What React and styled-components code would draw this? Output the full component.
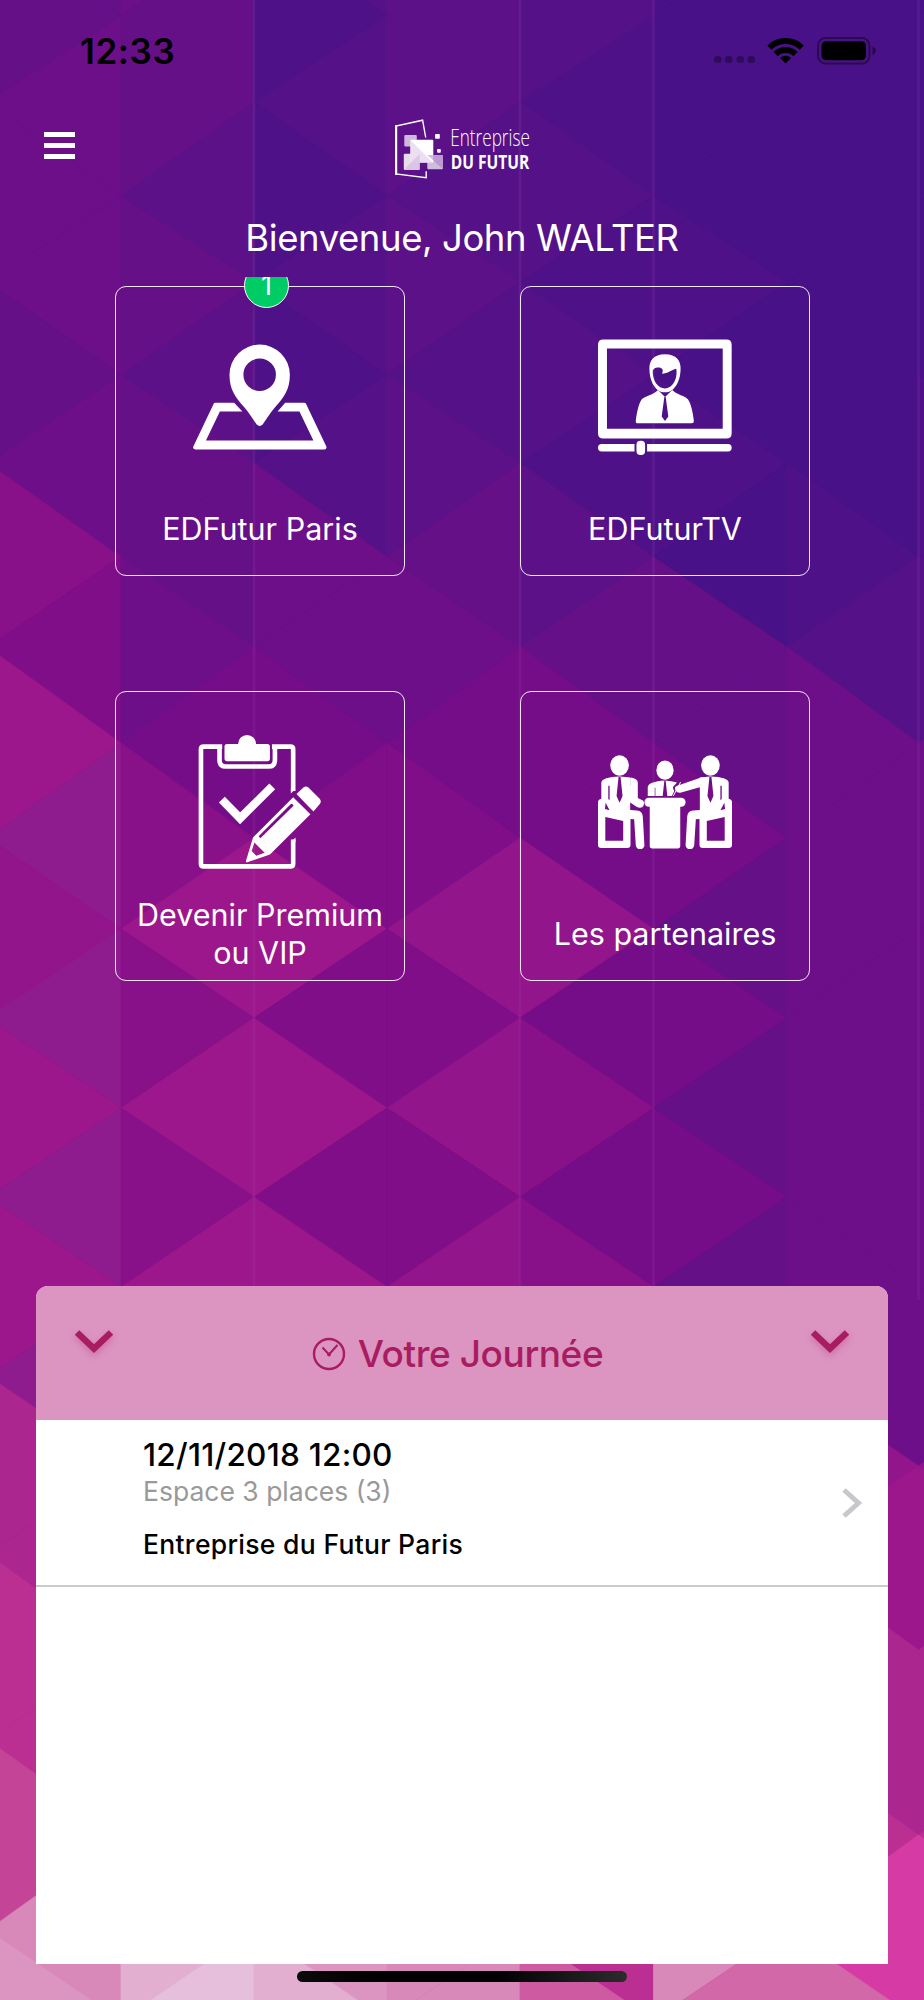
import styled, { createGlobalStyle } from 'styled-components';

const GlobalStyle = createGlobalStyle`
  * {
    box-sizing: border-box;
  }

  body {
    margin: 0;
    font-family: Inter, 'Liberation Sans', sans-serif;
  }
`;

// triangle mosaic: one string per column, one colour key per half step
const palette = {
  0: '#481187',
  1: '#4e1187',
  2: '#551288',
  3: '#5d1188',
  4: '#651087',
  5: '#6d0f88',
  6: '#750d88',
  7: '#7f0e88',
  8: '#881089',
  9: '#92158b',
  a: '#9b178b',
  b: '#8f1c8e',
  c: '#ac268f',
  d: '#bb2f92',
  e: '#c44598',
  f: '#d888b9',
  g: '#dc95c1',
  h: '#e2afd1',
  i: '#e5bfdb',
  j: '#ce5ba2',
  k: '#d63ba5',
  l: '#d268a8',
};

const columns = [
  '445554587ab9bababccddefg',
  '54434344568a8a8a7aaccdhi',
  '21212125567a7a7a7aacddgh',
  '33323234567979798aacddff',
  '2212121346696868588aacdj',
  '0000101044646464558aacfl',
  '000000012555555559accdkl',
  '000000112555555559accdkk',
];

const lineX = [-12, 121, 254, 387, 520, 653.5, 787, 918.5, 1052];
const stepY = [
  -78, 16, 102, 196, 282, 375, 463, 557, 647, 743, 838, 929, 1018, 1108, 1197,
  1287, 1376, 1466, 1554, 1650, 1740, 1835, 1930, 2020, 2110,
];

const trianglePoints = (col, i) => {
  const baseOnLeft = col % 2 !== i % 2;
  const baseX = baseOnLeft ? lineX[col] : lineX[col + 1];
  const tipX = baseOnLeft ? lineX[col + 1] : lineX[col];
  const top = i === 0 ? -170 : stepY[i - 1];
  return `${baseX},${top} ${tipX},${stepY[i]} ${baseX},${stepY[i + 1]}`;
};

function Mosaic() {
  return (
    <Backdrop viewBox="0 0 924 2000" aria-hidden="true">
      {columns.map((keys, col) =>
        keys.split('').map((key, i) => (
          <polygon
            key={`${col}-${i}`}
            points={trianglePoints(col, i)}
            fill={palette[key]}
            stroke={palette[key]}
            strokeWidth="0.8"
          />
        ))
      )}
      {[254, 520, 653.5, 918.5].map((x) => (
        <path key={x} d={`M${x} 0V1300`} stroke="#b04fc0" strokeOpacity="0.16" strokeWidth="2.5" />
      ))}
    </Backdrop>
  );
}

function StatusIcons() {
  return (
    <svg width="164" height="30" viewBox="713 35 164 30">
      <g fill="#000" fillOpacity="0.32">
        <rect x="714" y="56" width="7.5" height="7" rx="3" />
        <rect x="725" y="56" width="7.5" height="7" rx="3" />
        <rect x="736.5" y="56" width="7.5" height="7" rx="3" />
        <rect x="747.5" y="56" width="7.5" height="7" rx="3" />
      </g>
      <g fill="none" stroke="#000" strokeWidth="6">
        <path d="M769.4 47.6a23.4 23.4 0 0 1 32.4 0" />
        <path d="M775.6 54a14.6 14.6 0 0 1 20 0" />
      </g>
      <path d="M785.6 63.5l-5.500-5.500a8 8 0 0 1 11 0z" />
      <rect x="818" y="38" width="51.5" height="25.5" rx="7.5" fill="none" stroke="#000" strokeOpacity="0.4" strokeWidth="2" />
      <rect x="821.5" y="41.3" width="44.5" height="19" rx="4.5" />
      <path d="M872.5 46.5c4.5 1.5 4.5 7 0 8.700z" fillOpacity="0.45" />
    </svg>
  );
}

function Logo() {
  return (
    <LogoMark width="140" height="62" viewBox="391.7 118 140 62">
      <path
        d="M425.4 137.5L422.3 120.2 395.6 126v48l30.300 3.700v-6.500"
        fill="none"
        stroke="#fff"
        strokeWidth="1.4"
      />
      <path d="M395.9 125v50" stroke="#fff" strokeWidth="2" />
      <rect x="404" y="135" width="12.5" height="11.5" rx="1" fillOpacity="0.7" />
      <rect x="410" y="139.8" width="23" height="23" rx="1" />
      <rect x="403.5" y="153.7" width="16" height="16.3" rx="1" fillOpacity="0.85" />
      <rect x="427" y="155" width="15.7" height="14.2" rx="1" fillOpacity="0.72" />
      <path d="M410 140l23 23h-23z" fill="#d9bfe4" fillOpacity="0.5" />
      <path d="M403.5 170l16-16.300v16.300z" fill="#c9a6da" fillOpacity="0.4" />
      <path d="M427 155l15.700 14.200v-14.200z" fill="#a878c4" fillOpacity="0.5" />
      <rect x="434.8" y="134" width="4.7" height="4.7" rx="0.8" />
      <rect x="436.8" y="149" width="3.7" height="3.8" rx="0.8" />
      <LogoText x="450" y="146" textLength="79.5" lengthAdjust="spacingAndGlyphs" $weight={300} $size={23.5}>
        Entreprise
      </LogoText>
      <LogoText x="450.5" y="169" textLength="78.5" lengthAdjust="spacingAndGlyphs" $weight={700} $size={19.5}>
        DU FUTUR
      </LogoText>
    </LogoMark>
  );
}

function MapPinIcon() {
  return (
    <TileIcon viewBox="278 181 404 404">
      <path
        fillRule="evenodd"
        d="M479 225a91 91 0 0 1 91 91c0 45-18 68-44 97-16 18-26 36-38 53q-9 9-18 0c-12-17-22-35-38-53-26-29-44-52-44-97a91 91 0 0 1 91-91zM479 267a49 49 0 1 0 0 98 49 49 0 1 0 0-98z"
      />
      <path d="M345 400H402L427 427H359L317 514H641L599 427H533L556 400H613q4 0 6 4L680 532q2 9-6 9H285q-9-1-6-9L340 404q1-4 5-4z" />
    </TileIcon>
  );
}

function TvIcon() {
  return (
    <TileIcon viewBox="291 181 404 404">
      <path
        fillRule="evenodd"
        d="M307 210H678q16 0 16 16V492q0 16-16 16H307q-16 0-16-16V226q0-16 16-16zM318 237V479H667V237z"
      />
      <path
        fillRule="evenodd"
        d="M493 254c35 0 47 20 47 42 0 42-20 73-47 73s-47-31-47-73c0-22 12-42 47-42zM456 306c0-12 20-16 28-8 4 4 2 9 0 15 17 0 29-12 43-15 5 30-11 59-34 59s-37-25-37-51z"
      />
      <path
        fillRule="evenodd"
        d="M472 362l21 21 22-21c12 14 40 18 47 28 10 14 16 44 18 65q0 7-6 7H411q-7 0-6-7c2-21 8-51 18-65 8-9 37-14 49-28zM491 383l-8 59 10 13 10-13-8-59z"
      />
      <path d="M302 525H401V547H302a11 11 0 0 1 0-22zM439 525H683a11 11 0 0 1 0 22H439z" />
      <rect x="407" y="515" width="26" height="43" rx="12" />
    </TileIcon>
  );
}

function FormIcon() {
  return (
    <TileIcon viewBox="278 165 404 404">
      <g fill="none" stroke="#fff" strokeWidth="14">
        <path d="M366 200H310q-8 0-8 8V553q0 8 8 8H572q8 0 8-8V480" />
        <path d="M580 334V208q0-8-8-8H516" />
        <path d="M358 200V240q0 20 18 20H507q18 0 18-20V200" />
      </g>
      <path d="M573 488l14-14v14zM573 328h14l-14 13z" />
      <path d="M381 192h33a27 27 0 0 1 54 0h34q8 0 8 8v36q0 8-8 8H381q-8 0-8-8v-36q0-8 8-8z" />
      <path d="M365 360l55 56 97-96" fill="none" stroke="#fff" strokeWidth="25" />
      <path
        fillRule="evenodd"
        d="M459 474L580 353 632 404 510 525 442 549q-6 1-4-6zM463 489l-8 26 14 14 25-9zM476 470l5 6 100-98q-1-6-7-6z"
      />
      <path d="M590 343L611 323q7-5 15 0L660 357q6 7 1 15L641 396z" />
    </TileIcon>
  );
}

function SeatedPerson() {
  return (
    <>
      <ellipse cx="356" cy="257" rx="28" ry="31" />
      <path
        fillRule="evenodd"
        d="M301 308q2-16 55-18 20 1 32 3V391l20 2q16 1 18 17l5 88q-2 11-13 11t-13-11l-5-79-11-1v78q0 10-10 10H301q-10 0-10-10V368q0-9 10-11zM313 412V484H367V424zM353 292l-6 57 9 20 9-20-6-57zM322 318v40l4 4v-44zM314 369l-2 19 14 4z"
      />
    </>
  );
}

function MeetingIcon() {
  return (
    <TileIcon viewBox="291 165 404 404">
      <SeatedPerson />
      <path d="M390 293q21 4 21 15v47l17 8q5 12-4 20-8 3-17-2l-21-14v-49h2v-20h-2z" />
      <g transform="translate(986 0) scale(-1 1)">
        <SeatedPerson />
      </g>
      <path d="M606 292v28l-67 19q-10 1-14-7-6-10 5-14z" />
      <path d="M540 307l-22 42" stroke="#fff" strokeWidth="3" />
      <ellipse cx="493" cy="271" rx="26" ry="29" />
      <path
        fillRule="evenodd"
        d="M441 349V322q2-17 52-20 20 1 36 6l-12 14q0 8 4 12l-7 15zM491 303l-5 46h14l-5-46zM462 324v25h2v-25z"
      />
      <rect x="431" y="354" width="124" height="27" rx="13" />
      <rect x="447" y="370" width="92" height="137" rx="8" />
    </TileIcon>
  );
}

function SheetChevron() {
  return (
    <ChevronDown width="42" height="28" viewBox="0 0 42 28">
      <path d="M4 4.5l17 16 17-16" fill="none" stroke="#a81c62" strokeWidth="6.5" />
    </ChevronDown>
  );
}

const tiles = [
  { label: 'EDFutur Paris', Icon: MapPinIcon, badge: 1 },
  { label: 'EDFuturTV', Icon: TvIcon },
  { label: 'Devenir Premium ou VIP', Icon: FormIcon },
  { label: 'Les partenaires', Icon: MeetingIcon },
];

export default function App() {
  return (
    <Screen>
      <GlobalStyle />
      <Mosaic />
      <Content>
        <StatusBar>
          <Clock>12:33</Clock>
          <StatusIcons />
        </StatusBar>
        <TopBar>
          <MenuButton aria-label="Menu">
            <MenuLine />
            <MenuLine />
            <MenuLine />
          </MenuButton>
          <Logo />
        </TopBar>
        <Welcome>Bienvenue, John WALTER</Welcome>
        <TileGrid>
          {tiles.map(({ label, Icon, badge }) => (
            <Tile key={label}>
              {badge && <Badge>{badge}</Badge>}
              <Icon />
              <TileLabel>{label}</TileLabel>
            </Tile>
          ))}
        </TileGrid>
        <Sheet>
          <SheetHeader>
            <SheetChevron />
            <SheetTitle>
              <svg width="34" height="34" viewBox="0 0 34 34" fill="none" stroke="#a81c62">
                <circle cx="17" cy="17" r="15" strokeWidth="2.4" />
                <path d="M10.5 10.500l6.500 7 8.500-9.500" strokeWidth="2" />
                <circle cx="17" cy="17.5" r="1.5" fill="#a81c62" />
              </svg>
              Votre Journée
            </SheetTitle>
            <SheetChevron />
          </SheetHeader>
          <EventRow>
            <EventText>
              <EventDate>12/11/2018 12:00</EventDate>
              <EventPlace>Espace 3 places (3)</EventPlace>
              <EventName>Entreprise du Futur Paris</EventName>
            </EventText>
            <svg width="22" height="32" viewBox="0 0 22 32">
              <path d="M3 3l14.500 13L3 29" fill="none" stroke="#c7c7cc" strokeWidth="5" />
            </svg>
          </EventRow>
        </Sheet>
        <HomeIndicator />
      </Content>
    </Screen>
  );
}

const Screen = styled.div`
  display: grid;
  width: 924px;
  height: 2000px;
  overflow: hidden;
  background: #5b1188;
`;

const Backdrop = styled.svg`
  grid-area: 1 / 1;
  width: 924px;
  height: 2000px;
`;

const Content = styled.main`
  grid-area: 1 / 1;
  display: flex;
  flex-direction: column;
  z-index: 1;
`;

const StatusBar = styled.div`
  display: flex;
  align-items: center;
  justify-content: space-between;
  height: 100px;
  padding: 0 47px 0 80px;
`;

const Clock = styled.span`
  font-size: 35px;
  font-weight: 600;
  line-height: 40px;
  letter-spacing: 0.6px;
  color: #000;
  margin-top: 2px;
`;

const TopBar = styled.header`
  display: grid;
  grid-template-columns: 1fr auto 1fr;
  align-items: center;
  height: 98px;
  padding: 0 44px;
`;

const MenuButton = styled.button`
  display: flex;
  flex-direction: column;
  gap: 6px;
  width: 31px;
  padding: 0;
  border: 0;
  background: none;
  margin-bottom: 7px;
`;

const MenuLine = styled.span`
  height: 5px;
  width: 31px;
  background: #fff;
`;

const LogoMark = styled.svg`
  overflow: visible;
  fill: #fff;
`;

const LogoText = styled.text`
  font-family: 'Open Sans', 'Noto Sans', sans-serif;
  font-size: ${(props) => props.$size}px;
  font-weight: ${(props) => props.$weight};
`;

const Welcome = styled.h1`
  height: 79px;
  margin: 0;
  font-size: 36.5px;
  font-weight: 400;
  line-height: 81px;
  letter-spacing: -0.42px;
  text-align: center;
  color: #fff;
`;

/* clips the badge of the first row */
const TileGrid = styled.section`
  display: grid;
  grid-template-columns: repeat(2, 290px);
  grid-auto-rows: 290px;
  gap: 115px;
  height: 1009px;
  padding: 9px 0 0 115px;
  overflow: hidden;
`;

const Tile = styled.div`
  position: relative;
  display: flex;
  flex-direction: column;
  align-items: center;
  padding-top: 43px;
  border: 1px solid rgba(255, 255, 255, 0.9);
  border-radius: 11px;
`;

const Badge = styled.span`
  position: absolute;
  top: -24px;
  left: 128px;
  width: 45px;
  height: 45px;
  border: 1px solid #fff;
  border-radius: 50%;
  background: #00cc66;
  font-size: 27px;
  line-height: 43px;
  text-align: center;
  color: #fff;
`;

const TileIcon = styled.svg`
  flex: none;
  width: 134px;
  height: 134px;
  margin-right: 1px;
  fill: #fff;
`;

const TileLabel = styled.div`
  display: flex;
  flex: 1;
  align-items: center;
  width: 260px;
  justify-content: center;
  padding-top: 18px;
  font-size: 30.5px;
  line-height: 37.5px;
  text-align: center;
  color: #fff;
`;

const Sheet = styled.section`
  height: 678px;
  margin: 0 36px;
  border-radius: 12px 12px 0 0;
  overflow: hidden;
  background: #fff;
`;

const SheetHeader = styled.header`
  display: flex;
  align-items: flex-start;
  justify-content: space-between;
  height: 134px;
  padding: 42px 37px 0;
  background: #dc94c0;
`;

const ChevronDown = styled.svg`
  filter: drop-shadow(0 3px 3px rgba(168, 28, 98, 0.3));
`;

const SheetTitle = styled.h2`
  display: flex;
  align-items: center;
  gap: 12px;
  margin: 4px 9px 0 0;
  font-size: 37px;
  font-weight: 500;
  line-height: 44px;
  letter-spacing: -0.4px;
  color: #a81c62;
`;

const EventRow = styled.article`
  display: flex;
  align-items: center;
  justify-content: space-between;
  height: 167px;
  padding: 0 25px 0 107px;
  border-bottom: 2px solid #cbcbcd;
`;

const EventText = styled.div`
  display: flex;
  flex-direction: column;
  margin-bottom: 8px;
  color: #000;
`;

const EventDate = styled.strong`
  font-size: 31.5px;
  font-weight: 500;
  line-height: 38px;
  letter-spacing: 0.25px;
`;

const EventPlace = styled.span`
  font-size: 26.5px;
  line-height: 34px;
  color: #999;
`;

const EventName = styled.span`
  margin-top: 19px;
  font-size: 26.5px;
  font-weight: 500;
  line-height: 34px;
  letter-spacing: 0.3px;
`;

const HomeIndicator = styled.div`
  width: 330px;
  height: 11px;
  margin: 7px auto 0;
  border-radius: 6px;
  background: linear-gradient(90deg, #0a0a0a, #000 25%, #000 60%, #2c2c2c);
`;
